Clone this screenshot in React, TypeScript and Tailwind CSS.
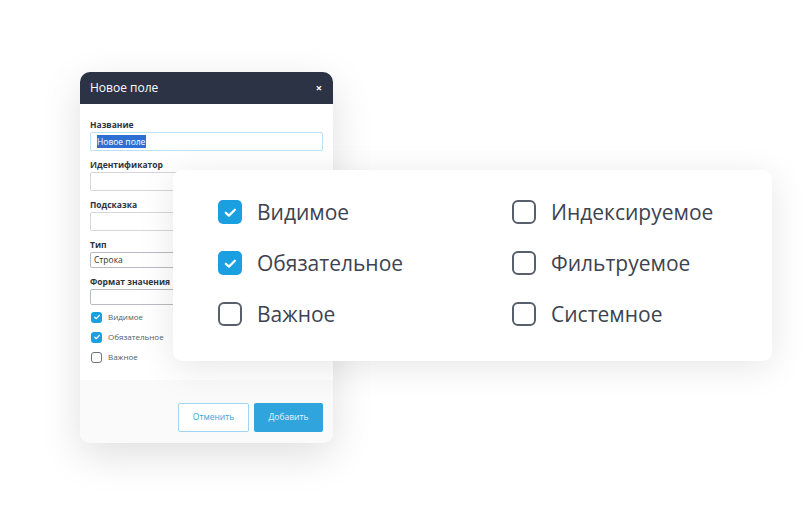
import React from 'react';

const font = { fontFamily: '"Open Sans", "Noto Sans", sans-serif' };

const SmallCheck: React.FC<{ checked: boolean; label: string }> = ({ checked, label }) => (
  <div className="flex items-center h-[12px]">
    {checked ? (
      <span className="w-[11px] h-[11px] rounded-[3px] bg-[#1a9fe0] flex items-center justify-center">
        <svg viewBox="0 0 12 12" className="w-[8px] h-[8px]">
          <path d="M2.5 6.2 L5 8.5 L9.5 3.5" fill="none" stroke="white" strokeWidth="2" strokeLinecap="round" strokeLinejoin="round" />
        </svg>
      </span>
    ) : (
      <span className="w-[11px] h-[11px] rounded-[3px] border border-[#6b7280]" />
    )}
    <span className="ml-[6px] text-[8px] text-[#555b66]">{label}</span>
  </div>
);

const BigCheck: React.FC<{ checked: boolean; label: string }> = ({ checked, label }) => (
  <div className="flex items-center h-[24px]">
    {checked ? (
      <span className="w-[24px] h-[24px] rounded-[5px] bg-[#1a9fe0] flex items-center justify-center">
        <svg viewBox="0 0 24 24" className="w-[15px] h-[15px]">
          <path d="M4.5 12.5 L9.5 17 L19 7.5" fill="none" stroke="white" strokeWidth="3.6" strokeLinecap="round" strokeLinejoin="round" />
        </svg>
      </span>
    ) : (
      <span className="w-[24px] h-[24px] rounded-[6px] border-2 border-[#595f6b]" />
    )}
    <span className="ml-[15px] text-[21px] leading-none text-[#3d4350]">{label}</span>
  </div>
);

const Field: React.FC<{ label: string; children?: React.ReactNode }> = ({ label, children }) => (
  <div className="flex flex-col">
    <span className="text-[8.5px] font-bold text-[#2d333d] leading-[12px]">{label}</span>
    {children}
  </div>
);

export default function App() {
  return (
    <div className="relative w-[812px] h-[532px] bg-white overflow-hidden" style={font}>
      <div className="ml-[80px] mt-[72px] w-[253px] h-[371px] rounded-[10px] bg-white shadow-[0_12px_40px_rgba(0,0,0,0.13)] flex flex-col overflow-hidden">
        <div className="h-[32px] bg-[#2b3344] flex items-center justify-between px-[10px]">
          <span className="text-white text-[12px]">Новое поле</span>
          <span className="text-white text-[11px] font-bold mr-[1px]">×</span>
        </div>
        <div className="px-[10px] pt-[15px] flex flex-col gap-[8px] bg-white h-[276px]">
          <Field label="Название">
            <div className="mt-[1px] h-[19px] border border-[#bde2f6] rounded-[2px] flex items-center pl-[6px]">
              <span className="bg-[#2d6fd2] text-white text-[8.5px] leading-[13px] pr-[1px]">Новое поле</span>
            </div>
          </Field>
          <Field label="Идентификатор">
            <div className="mt-[1px] h-[19px] border border-[#d4d6da] rounded-[2px]" />
          </Field>
          <Field label="Подсказка">
            <div className="mt-[1px] h-[19px] border border-[#d4d6da] rounded-[2px]" />
          </Field>
          <Field label="Тип">
            <div className="mt-[1px] h-[16px] border border-[#b8bbc1] rounded-[2px] flex items-center pl-[3px]">
              <span className="text-[8.5px] text-[#333]">Строка</span>
            </div>
          </Field>
          <Field label="Формат значения">
            <div className="mt-[1px] h-[16px] border border-[#b8bbc1] rounded-[2px]" />
          </Field>
          <div className="flex flex-col gap-[8px] -mt-[2px] pl-[1px]">
            <SmallCheck checked label="Видимое" />
            <SmallCheck checked label="Обязательное" />
            <SmallCheck checked={false} label="Важное" />
          </div>
        </div>
        <div className="flex-1 bg-[#fafafa] flex items-end justify-end gap-[5px] px-[10px] pb-[11px]">
          <button className="w-[71px] h-[29px] border border-[#9fd5f1] rounded-[2px] bg-white text-[8.5px] text-[#3ca2dc]">Отменить</button>
          <button className="w-[69px] h-[29px] rounded-[2px] bg-[#2fa4dd] text-[8.5px] text-[#e6f3fb]">Добавить</button>
        </div>
      </div>

      <div className="absolute left-[173px] top-[170px] w-[599px] h-[191px] rounded-[9px] bg-white shadow-[0_6px_36px_rgba(0,0,0,0.1)] flex pt-[30px] pl-[45px]">
        <div className="w-[294px] flex flex-col gap-[27px]">
          <BigCheck checked label="Видимое" />
          <BigCheck checked label="Обязательное" />
          <BigCheck checked={false} label="Важное" />
        </div>
        <div className="flex flex-col gap-[27px]">
          <BigCheck checked={false} label="Индексируемое" />
          <BigCheck checked={false} label="Фильтруемое" />
          <BigCheck checked={false} label="Системное" />
        </div>
      </div>
    </div>
  );
}
